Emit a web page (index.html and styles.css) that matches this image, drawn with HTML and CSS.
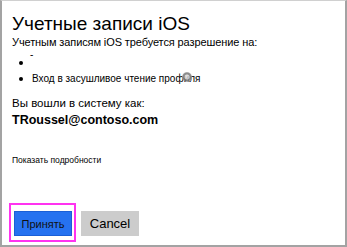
FILE: index.html
```html
<!DOCTYPE html>
<html lang="ru">
<head>
<meta charset="utf-8">
<link rel="stylesheet" href="styles.css">
</head>
<body>
<div class="dialog">
  <div class="content">
    <h1 class="title">Учетные записи iOS</h1>
    <p class="intro">Учетным записям iOS требуется разрешение на:</p>
    <ul class="perms">
      <li class="perm perm-empty"><span class="dash">-</span></li>
      <li class="perm">Вход в засушливое чтение проф<span class="info-wrap">и<span class="info"></span></span>ля</li>
    </ul>
    <p class="signed">Вы вошли в систему как:</p>
    <p class="account">TRoussel@contoso.com</p>
    <a class="details">Показать подробности</a>
  </div>
  <div class="actions">
    <span class="focus-ring"><button class="btn btn-primary">Принять</button></span>
    <button class="btn btn-secondary">Cancel</button>
  </div>
</div>
</body>
</html>
```
FILE: styles.css
```css
html, body {
  margin: 0;
  padding: 0;
  background: #ffffff;
}
.dialog {
  box-sizing: border-box;
  width: 347px;
  height: 247px;
  border: 2px solid #a3a3a3;
  border-top: 1px solid #d0d0d0;
  display: flex;
  flex-direction: column;
  justify-content: space-between;
  font-family: "Liberation Sans", Arial, sans-serif;
  color: #000;
}
.content {
  padding: 12px 0 0 10px;
}
.title {
  margin: 0;
  font-size: 19px;
  font-weight: normal;
  line-height: 22px;
}
.intro {
  margin: 0;
  font-size: 11px;
  line-height: 14px;
  letter-spacing: -0.1px;
}
.perms {
  list-style: none;
  margin: 6px 0 0 0;
  padding: 0 0 0 20px;
  font-size: 10px;
  line-height: 16px;
}
.perm {
  position: relative;
  height: 16px;
}
.perm::before {
  content: "";
  position: absolute;
  left: -13px;
  top: 6px;
  width: 4px;
  height: 4px;
  border-radius: 50%;
  background: #000;
}
.dash {
  position: absolute;
  left: -2px;
  top: -8px;
}
.info-wrap {
  position: relative;
}
.info {
  position: absolute;
  left: -2px;
  top: -1px;
  width: 10px;
  height: 10px;
  border-radius: 50%;
  background: radial-gradient(circle at 50% 50%, #d8d8d8 0 2px, #777 3px 4px, #bbb 5px);
  opacity: 0.85;
}
.signed {
  margin: 8px 0 0 0;
  font-size: 11.5px;
  line-height: 16px;
}
.account {
  margin: 1px 0 0 0;
  font-size: 12.5px;
  font-weight: bold;
  line-height: 17px;
}
.details {
  display: block;
  margin-top: 25px;
  font-size: 8.5px;
  line-height: 12px;
}
.actions {
  display: flex;
  align-items: center;
  gap: 5px;
  padding: 0 0 3px 7px;
}
.focus-ring {
  display: inline-flex;
  border: 2px solid #ff33f0;
  padding: 6px 2px 4px 3px;
}
.btn {
  width: 58px;
  height: 25px;
  border: none;
  font-family: "Liberation Sans", Arial, sans-serif;
  font-size: 12px;
  padding: 0;
  margin: 0;
}
.btn-primary {
  background: #2672f0;
  color: #111;
  border: 1px solid #1b5fd6;
  font-size: 11px;
}
.btn-secondary {
  background: #cccccc;
  color: #000;
  margin-top: 2px;
  font-size: 13px;
}
```
